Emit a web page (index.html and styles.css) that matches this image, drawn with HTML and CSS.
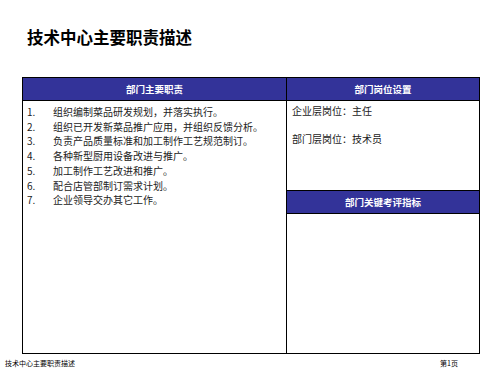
FILE: index.html
```html
<!DOCTYPE html>
<html lang="zh">
<head>
<meta charset="utf-8">
<link rel="stylesheet" href="styles.css">
</head>
<body>
<div class="page">
  <h1 class="title">技术中心主要职责描述</h1>
  <div class="table">
    <div class="col col-left">
      <div class="head">部门主要职责</div>
      <ol class="duties">
        <li><span class="num">1.</span><span>组织编制菜品研发规划，并落实执行。</span></li>
        <li><span class="num">2.</span><span>组织已开发新菜品推广应用，并组织反馈分析。</span></li>
        <li><span class="num">3.</span><span>负责产品质量标准和加工制作工艺规范制订。</span></li>
        <li><span class="num">4.</span><span>各种新型厨用设备改进与推广。</span></li>
        <li><span class="num">5.</span><span>加工制作工艺改进和推广。</span></li>
        <li><span class="num">6.</span><span>配合店管部制订需求计划。</span></li>
        <li><span class="num">7.</span><span>企业领导交办其它工作。</span></li>
      </ol>
    </div>
    <div class="col col-right">
      <div class="head">部门岗位设置</div>
      <div class="posts">
        <p>企业层岗位：主任</p>
        <p>部门层岗位：技术员</p>
      </div>
      <div class="head head-mid">部门关键考评指标</div>
      <div class="kpi"></div>
    </div>
  </div>
  <div class="footer">
    <span>技术中心主要职责描述</span>
    <span>第1页</span>
  </div>
</div>
</body>
</html>
```

FILE: styles.css
```css
* { box-sizing: border-box; }
html, body { margin: 0; padding: 0; background: #fff; }
body {
  width: 500px;
  height: 375px;
  font-family: "Noto Sans CJK SC", "Noto Sans", sans-serif;
  color: #000;
}
.page {
  display: flex;
  flex-direction: column;
  height: 375px;
}
.title {
  margin: 0;
  padding: 28px 0 0 27px;
  height: 77px;
  font-size: 16.5px;
  line-height: 18px;
  font-weight: 700;
}
.table {
  margin-left: 22px;
  width: 458px;
  height: 277px;
  border: 1px solid #000;
  display: flex;
}
.col { display: flex; flex-direction: column; }
.col-left { width: 263px; }
.col-right { flex: 1; border-left: 1.5px solid #000; }
.head {
  height: 23px;
  background: #333399;
  color: #fff;
  font-size: 9.5px;
  font-weight: 700;
  display: flex;
  align-items: center;
  justify-content: center;
  border-bottom: 1px solid #000;
}
.duties {
  list-style: none;
  margin: 0;
  padding: 4px 0 0 4px;
  font-size: 10px;
  line-height: 14.7px;
  color: #222;
}
.duties li { display: flex; }
.duties .num { width: 26px; }
.posts {
  height: 90px;
  padding: 3px 0 0 5px;
  font-size: 10px;
  line-height: 14px;
  color: #222;
  border-bottom: 1px solid #000;
}
.posts p { margin: 0 0 14px; }
.head-mid { height: 23px; }
.kpi { flex: 1; }
.footer {
  display: flex;
  justify-content: space-between;
  padding: 5px 42px 0 5px;
  font-size: 7px;
  line-height: 9px;
  color: #000;
}
```
